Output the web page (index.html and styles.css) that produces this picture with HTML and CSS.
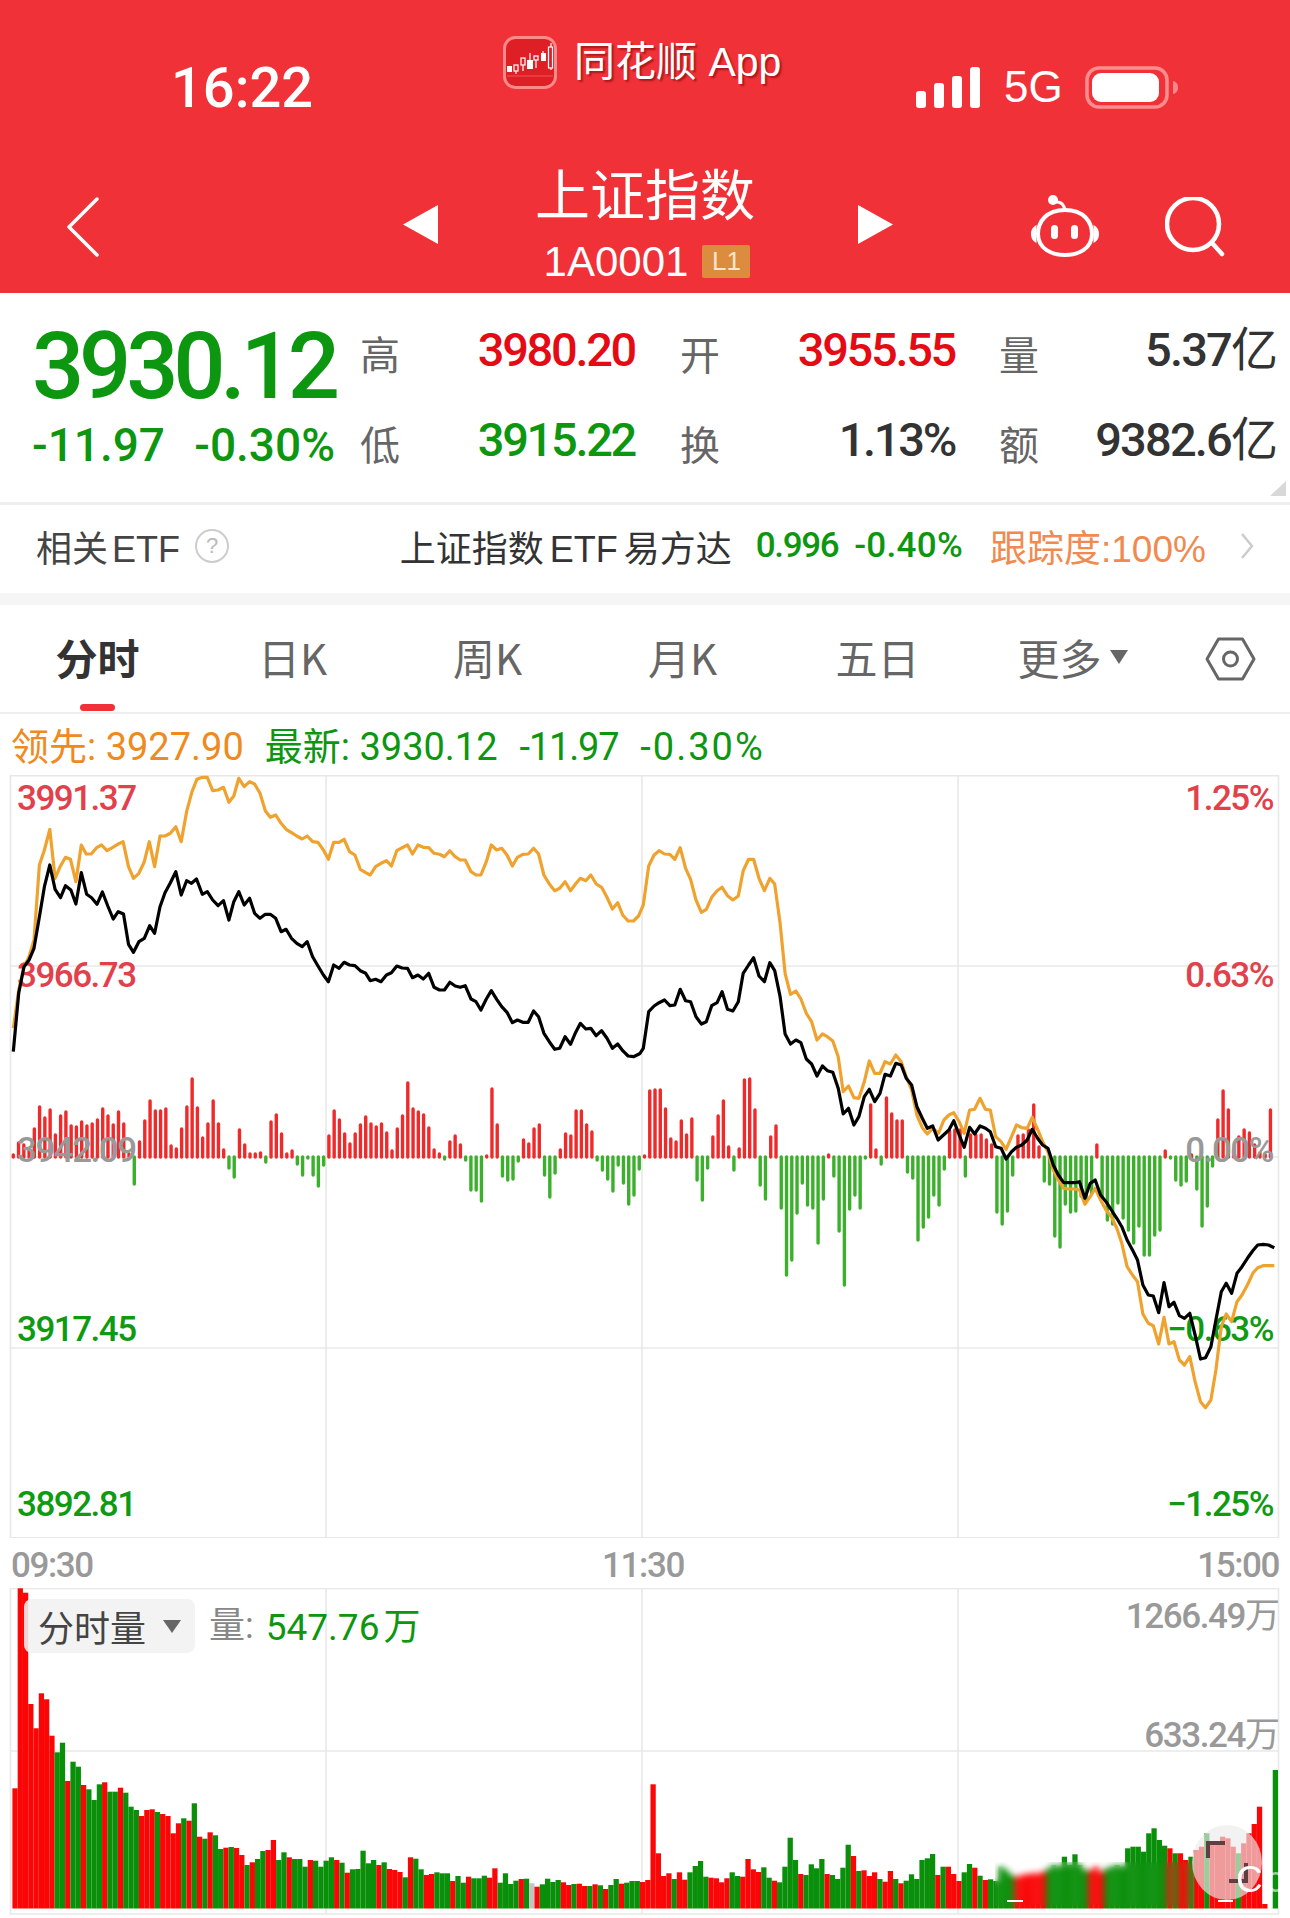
FILE: index.html
```html
<!DOCTYPE html>
<html lang="zh-CN">
<head>
<meta charset="utf-8">
<title>上证指数</title>
<link rel="stylesheet" href="styles.css">
</head>
<body>
<div class="page">
  <header class="header">
    <div class="status">
      <div class="time">16:22</div>
      <div class="brand">
        <svg class="logo" viewBox="0 0 54 53">
          <rect x="1.5" y="1.5" width="51" height="50" rx="11" fill="#df1f26" stroke="#fa8a8c" stroke-width="3"/>
          <path d="M4 40H50" stroke="#f0585c" stroke-width="1"/>
          <path d="M13 30v8M20 27v8M27 17v11M33 22v10M40 15v9M48 7v27" stroke="#fff" stroke-width="1.2"/>
          <rect x="4" y="30" width="5" height="6" fill="#fff"/>
          <rect x="11" y="29" width="4" height="6" fill="#df1f26" stroke="#fff" stroke-width="1.2"/>
          <rect x="18" y="22" width="4" height="7" fill="#df1f26" stroke="#fff" stroke-width="1.2"/>
          <rect x="24" y="24" width="6" height="9" fill="#fff"/>
          <rect x="31" y="20" width="4" height="4" fill="#df1f26" stroke="#fff" stroke-width="1.2"/>
          <rect x="38" y="17" width="5" height="8" fill="#fff"/>
          <rect x="45.5" y="11" width="4" height="21" fill="#df1f26" stroke="#fff" stroke-width="1.2"/>
        </svg>
        <span class="brand-name">同花顺 App</span>
      </div>
      <div class="sys">
        <svg class="signal" viewBox="0 0 65 41">
          <rect x="0" y="24" width="10" height="17" rx="3" fill="#fff"/>
          <rect x="18" y="16" width="10" height="25" rx="3" fill="#fff"/>
          <rect x="36" y="9" width="10" height="32" rx="3" fill="#fff"/>
          <rect x="54" y="0" width="10" height="41" rx="3" fill="#fff"/>
        </svg>
        <span class="net">5G</span>
        <svg class="battery" viewBox="0 0 94 43">
          <rect x="2" y="2" width="80" height="39" rx="12" fill="none" stroke="#fb8d8f" stroke-width="3.5"/>
          <rect x="7" y="7" width="67" height="29" rx="9" fill="#fff"/>
          <path d="M88 15c4 1 5 4 5 6.500s-1 5.500-5 6.500z" fill="#f98688"/>
        </svg>
      </div>
    </div>
    <nav class="nav">
      <svg class="back" viewBox="0 0 33 60"><path d="M31 2 3 30l28 28" fill="none" stroke="#fff" stroke-width="3.500" stroke-linecap="round" stroke-linejoin="round"/></svg>
      <svg class="tri" viewBox="0 0 35 39"><path d="M35 0V39L0 19.500z" fill="#fff"/></svg>
      <div class="nav-title">
        <div class="index-name">上证指数</div>
        <div class="index-code"><span>1A0001</span><span class="level">L1</span></div>
      </div>
      <svg class="tri" viewBox="0 0 35 39"><path d="M0 0V39L35 19.500z" fill="#fff"/></svg>
      <svg class="robot" viewBox="0 0 70 63">
        <circle cx="23" cy="6" r="5" fill="#fff"/>
        <path d="M27 8c4 0 7 3 8 8" fill="none" stroke="#fff" stroke-width="3" stroke-linecap="round"/>
        <path d="M35 16c19 0 27 12 27 24 0 15-14 21-27 21S8 55 8 40c0-12 8-24 27-24z" fill="none" stroke="#fff" stroke-width="4"/>
        <path d="M6.500 31c-4 2-5.500 5-5.500 9s1.500 7 5.500 9zM63.500 31c4 2 5.500 5 5.500 9s-1.500 7-5.500 9z" fill="#fff"/>
        <rect x="21" y="31" width="7" height="14" rx="3.500" fill="#fff"/>
        <rect x="41" y="31" width="7" height="14" rx="3.500" fill="#fff"/>
      </svg>
      <svg class="search" viewBox="0 0 60 60"><circle cx="28" cy="27" r="26" fill="none" stroke="#fff" stroke-width="4.500"/><path d="M48 47l9 10" stroke="#fff" stroke-width="4.500" stroke-linecap="round"/></svg>
    </nav>
  </header>

  <section class="quote">
    <div class="quote-main">
      <div class="price">3930.12</div>
      <div class="change"><span>-11.97</span><span>-0.30%</span></div>
    </div>
    <div class="stats">
      <span class="stat-label">高</span><span class="stat-val up">3980.20</span>
      <span class="stat-label">开</span><span class="stat-val up">3955.55</span>
      <span class="stat-label">量</span><span class="stat-val">5.37<i>亿</i></span>
      <span class="stat-label">低</span><span class="stat-val down">3915.22</span>
      <span class="stat-label">换</span><span class="stat-val">1.13%</span>
      <span class="stat-label">额</span><span class="stat-val">9382.6<i>亿</i></span>
    </div>
    <span class="corner"></span>
  </section>

  <section class="etf">
    <span class="etf-title">相关 ETF</span>
    <span class="help">?</span>
    <span class="etf-name">上证指数 ETF 易方达</span>
    <span class="etf-num">0.996</span>
    <span class="etf-num etf-pct">-0.40%</span>
    <span class="etf-track">跟踪度:100%</span>
    <svg class="etf-arrow" viewBox="0 0 14 26"><path d="M2 1l10 12L2 25" fill="none" stroke="#ccc" stroke-width="2.500"/></svg>
  </section>
  <div class="band"></div>

  <nav class="tabs">
    <div class="tab active">分时</div>
    <div class="tab">日K</div>
    <div class="tab">周K</div>
    <div class="tab">月K</div>
    <div class="tab">五日</div>
    <div class="tab">更多<span class="caret"></span></div>
    <div class="tab-set">
      <svg class="hex" viewBox="0 0 51 44"><path d="M13.500 2h24L49 22 37.500 42h-24L2 22z" fill="none" stroke="#666" stroke-width="3" stroke-linejoin="round"/><circle cx="25.500" cy="22" r="7" fill="none" stroke="#666" stroke-width="3"/></svg>
    </div>
  </nav>

  <div class="legend">
    <span class="lead">领先: 3927.90</span>
    <span class="last">最新: 3930.12</span>
    <span class="last chg-a">-11.97</span>
    <span class="last chg-b">-0.30%</span>
  </div>

  <section class="chart price-chart">
    <svg id="priceGrid" class="layer" viewBox="0 775 1290 763"></svg>
    <span class="axis up-t left y0">3991.37</span>
    <span class="axis up-t left y1">3966.73</span>
    <span class="axis zero left y2">3942.09</span>
    <span class="axis down-t left y3">3917.45</span>
    <span class="axis down-t left y4">3892.81</span>
    <span class="axis up-t right y0">1.25%</span>
    <span class="axis up-t right y1">0.63%</span>
    <span class="axis zero right y2">0.00%</span>
    <span class="axis down-t right y3">−0.63%</span>
    <span class="axis down-t right y4">−1.25%</span>
    <svg id="priceLines" class="layer" viewBox="0 775 1290 763"></svg>
  </section>

  <div class="times"><span>09:30</span><span class="mid">11:30</span><span>15:00</span></div>

  <section class="chart volume-chart">
    <svg id="volBars" class="layer" viewBox="0 1588 1290 330"></svg>
    <div class="vol-head">
      <div class="vol-select">分时量<span class="vol-caret"></span></div>
      <span class="vol-label">量:</span>
      <span class="vol-num">547.76<i>万</i></span>
    </div>
    <span class="vol-axis va0">1266.49<i>万</i></span>
    <span class="vol-axis va1">633.24<i>万</i></span>
    <div class="smudge"></div>
    <div class="fab">
      <svg viewBox="0 0 70 75"><path d="M16 33V18h17M54 38v18H37" fill="none" stroke="#5e4044" stroke-width="4"/></svg>
    </div>
    <span class="mark">C<span class="mark-c">c</span></span>
    <span class="dash d1"></span>
    <span class="dash d2"></span>
  </section>
</div>
<script src="chart.js"></script>
</body>
</html>
```

FILE: styles.css
```css
* { box-sizing: border-box; }
html, body { margin: 0; padding: 0; background: #fff; }
body { font-family: "Liberation Sans", "Noto Sans CJK SC", sans-serif; }
i { font-style: normal; }
.page { width: 1290px; height: 1918px; overflow: hidden; position: relative; }

.header { height: 293px; background: #f03238; color: #fff; }
.status { height: 165px; display: flex; align-items: flex-start; padding: 36px 0 0 171px; }
.time { width: 332px; margin-top: 22px; height: 60px; font: 500 56px/60px Roboto, sans-serif; }
.brand { width: 413px; display: flex; align-items: center; gap: 17px; height: 53px; }
.logo { width: 54px; height: 53px; flex: none; }
.brand-name { font: 400 41px/55px "Liberation Sans", "Noto Sans CJK SC", sans-serif; text-shadow: 2px 2px 2px rgba(110, 0, 0, .55); white-space: nowrap; }
.sys { display: flex; align-items: center; height: 60px; margin-top: 21px; }
.signal { width: 65px; height: 41px; }
.net { font: 400 44px/60px "Liberation Sans", sans-serif; margin: 0 22px 0 23px; }
.battery { width: 94px; height: 43px; }

.nav { height: 128px; display: flex; align-items: flex-start; padding-left: 66px; }
.back { width: 33px; height: 60px; margin: 32px 304px 0 0; flex: none; }
.tri { width: 35px; height: 39px; margin-top: 40px; flex: none; }
.nav-title { width: 420px; flex: none; display: flex; flex-direction: column; align-items: center; }
.index-name { font: 400 55px/56px "Noto Sans CJK SC", sans-serif; margin-left: -6px; margin-top: -2px; }
.index-code { margin-top: 26px; height: 33px; display: flex; align-items: center; gap: 14px; font: 400 42px/33px "Liberation Sans", sans-serif; margin-left: -2px; }
.level { width: 48px; height: 33px; background: #dc8c3f; border-radius: 2px; font-size: 26px; line-height: 33px; text-align: center; color: #fbe6cf; }
.robot { width: 70px; height: 63px; margin: 29px 65px 0 137px; flex: none; }
.search { width: 60px; height: 60px; margin-top: 32px; flex: none; }

.quote { height: 212px; display: flex; border-bottom: 3px solid #eee; position: relative; }
.quote-main { width: 360px; padding: 29px 0 0 32px; flex: none; color: #0d960f; font-family: Roboto, sans-serif; font-weight: 500; }
.price { font-size: 92px; line-height: 90px; letter-spacing: -5.2px; }
.change { margin-top: 8px; width: 303px; display: flex; justify-content: space-between; font-size: 46px; line-height: 50px; }
.stats { flex: none; padding-top: 15px; display: grid; grid-template-columns: 40px 235px 84px 236px 83px 240px; grid-auto-rows: 90px; }
.stat-label { font: 400 40px/90px "Noto Sans CJK SC", sans-serif; color: #666; }
.stat-label:nth-child(6n+3) { margin-left: 45px; }
.stat-label:nth-child(6n+5) { margin-left: 44px; }
.stat-val { font: 500 47px/84px Roboto, "Noto Sans CJK SC", sans-serif; letter-spacing: -2.3px; text-align: right; color: #333; white-space: nowrap; }
.stat-val:nth-child(6n) { letter-spacing: -1.8px; }
.stat-val i { font-size: 47px; letter-spacing: 0; font-weight: 400; }
.up { color: #e40b14; }
.down { color: #0d960f; }
.corner { position: absolute; right: 4px; bottom: 6px; width: 0; height: 0; border-left: 16px solid transparent; border-bottom: 15px solid #d8d8d8; }

.etf { height: 88px; display: flex; align-items: center; padding: 0 36px 6px; font-size: 36px; color: #333; white-space: nowrap; }
.etf-title { color: #444; word-spacing: -6px; }
.help { width: 34px; height: 34px; border: 2.5px solid #ccc; border-radius: 50%; margin-left: 15px; color: #bbb; font-size: 22px; line-height: 29px; text-align: center; flex: none; }
.etf-name { margin-left: auto; width: 328px; word-spacing: -4px; color: #333; }
.etf-num { font: 500 35px/40px Roboto, sans-serif; letter-spacing: -1.4px; color: #0d960f; margin-left: 28px; }
.etf-num.etf-pct { margin-left: 16px; letter-spacing: .3px; }
.etf-track { margin-left: 27px; color: #f08a50; width: 214px; font-size: 37px; }
.etf-arrow { width: 14px; height: 26px; margin-left: 36px; flex: none; }

.band { height: 12px; background: #f5f5f5; }

.tabs { height: 109px; display: flex; border-bottom: 2px solid #eee; position: relative; }
.tab { width: 195px; flex: none; text-align: center; font: 400 42px/106px "Noto Sans CJK SC", sans-serif; color: #666; display: flex; justify-content: center; align-items: center; padding-bottom: 3px; }
.tab.active { color: #333; font-weight: 700; position: relative; }
.tab.active::after { content: ""; position: absolute; left: 80px; top: 99px; width: 35px; height: 7px; background: #f03238; border-radius: 4px; }
.caret { width: 0; height: 0; margin-left: 8px; border-left: 9px solid transparent; border-right: 9px solid transparent; border-top: 14px solid #666; }
.tab-set { flex: 1; display: flex; align-items: center; justify-content: center; }
.hex { width: 51px; height: 44px; }

.legend { height: 61px; display: flex; align-items: center; padding: 4px 0 0 11px; font: 400 38px/60px Roboto, "Noto Sans CJK SC", sans-serif; white-space: nowrap; }
.lead { color: #ee8a1e; margin-right: 21px; }
.last { color: #0d960f; margin-right: 22px; }
.chg-a { letter-spacing: -1.2px; }
.chg-b { letter-spacing: 2px; }

.chart { position: relative; width: 1290px; }
.layer { position: absolute; left: 0; top: 0; width: 1290px; height: 100%; }
.price-chart { height: 763px; }
.axis { position: absolute; font: 500 35px/40px Roboto, sans-serif; letter-spacing: -1.5px; }
.left { left: 17px; }
.right { right: 17px; }
.y0 { top: 4px; }
.y1 { top: 181px; }
.y2 { top: 356px; }
.y3 { top: 535px; }
.y4 { top: 710px; }
.up-t { color: #e2404a; }
.zero { color: #999; }
.down-t { color: #0f9a12; }

.times { height: 50px; display: flex; justify-content: space-between; align-items: center; padding: 6px 11px 0; font: 500 35px/44px Roboto, sans-serif; letter-spacing: -1.4px; color: #999; }
.mid { margin-left: -4px; }

.volume-chart { height: 330px; }
.vol-head { position: absolute; left: 24px; top: 11px; display: flex; align-items: center; height: 54px; }
.vol-select { width: 171px; height: 54px; background: rgba(241, 241, 241, .88); border-radius: 8px; padding-left: 14px; display: flex; align-items: center; font: 400 36px/54px "Noto Sans CJK SC", sans-serif; color: #444; }
.vol-caret { width: 0; height: 0; margin-left: 17px; border-left: 9px solid transparent; border-right: 9px solid transparent; border-top: 13px solid #666; }
.vol-label { margin-left: 14px; font: 400 36px/54px Roboto, "Noto Sans CJK SC", sans-serif; color: #888; white-space: nowrap; }
.vol-num { margin-left: 12px; padding-top: 4px; font: 400 37px/54px Roboto, "Noto Sans CJK SC", sans-serif; color: #0d960f; white-space: nowrap; }
.vol-num i { margin-left: 4px; }
.vol-axis { position: absolute; right: 10px; font: 500 35px/40px Roboto, "Noto Sans CJK SC", sans-serif; letter-spacing: -1.4px; color: #999; white-space: nowrap; }
.vol-axis i { letter-spacing: 0; font-weight: 400; }
.va0 { top: 9px; }
.va1 { top: 128px; }
.smudge { position: absolute; left: 995px; top: 274px; width: 200px; height: 46px; -webkit-backdrop-filter: blur(3px); backdrop-filter: blur(3px); }
.fab { position: absolute; left: 1192px; top: 237px; width: 70px; height: 75px; border-radius: 50%; background: rgba(235, 235, 235, .65); }
.fab svg { display: block; width: 70px; height: 75px; }
.mark { position: absolute; left: 1236px; top: 272px; font: 400 37px/40px "Liberation Sans", sans-serif; color: #fff; white-space: nowrap; }
.mark-c { opacity: .6; margin-left: 3px; }
.dash { position: absolute; height: 2px; background: #fff; }
.d1 { left: 1007px; top: 312px; width: 16px; }
.d2 { left: 1218px; top: 312px; width: 15px; }
```

FILE: chart.js
```js
(function () {
  var NS = "http://www.w3.org/2000/svg";
  var RED = "#ee2a2a", GREEN = "#3cb02c", VR = "#fa0606", VG = "#0a8f0a";

  function el(parent, name, attrs) {
    var n = document.createElementNS(NS, name);
    for (var k in attrs) n.setAttribute(k, attrs[k]);
    parent.appendChild(n);
    return n;
  }
  function line(p, x1, y1, x2, y2) {
    el(p, "line", { x1: x1, y1: y1, x2: x2, y2: y2, stroke: "#e8e8e8", "stroke-width": 1.6 });
  }
  function conv(str, x0, y0) {
    return str.trim().split(/\s+/).map(function (s) {
      var a = s.split(",");
      return (x0 + a[0] / 2.412).toFixed(1) + "," + (y0 + a[1] / 3).toFixed(1);
    }).join(" ");
  }

  /* price panel grid */
  var pg = document.getElementById("priceGrid");
  [775.7, 966, 1348, 1537.7].forEach(function (y) { line(pg, 10, y, 1279, y); });
  [10.5, 326, 642, 958, 1278.5].forEach(function (x) { line(pg, x, 775, x, 1538); });

  /* intraday bars: positive = red, negative = green (height in px) */
  var bars = [2,14,12,6,28,50,39,47,22,41,45,31,30,35,31,33,37,48,41,32,45,33,3,-27,15,36,56,46,46,48,11,8,28,50,78,49,19,33,56,33,7,-11,-20,27,12,3,3,4,-5,35,42,23,3,6,-7,-18,-1,-18,-29,-8,21,46,37,23,13,23,32,40,33,30,33,24,6,28,41,74,48,45,42,29,7,3,-2,15,21,12,-3,-33,-33,-44,1,68,32,-19,-23,-22,-4,17,13,28,32,-18,-40,-16,7,23,21,46,46,32,25,-3,-13,-22,-34,-8,-26,-47,-38,-12,1,66,67,67,48,18,15,36,22,38,-23,-43,-11,20,41,56,10,-13,8,77,78,47,-28,-42,20,31,-51,-118,-103,-56,-26,-48,-51,-86,-42,2,-19,-74,-128,-52,-38,-51,-1,52,7,-7,59,43,36,36,-15,-21,-83,-70,-60,-38,-48,-12,26,27,27,-19,22,22,22,17,12,-55,-67,-54,-18,21,22,27,52,10,-24,-27,-79,-90,-47,-55,-54,-39,-43,-36,12,-39,-63,-67,-46,-61,-73,-86,-69,-98,-98,-78,-73,6,-1,-23,-28,-24,2,-32,-69,-49,-9,37,66,47,7,20,27,24,12,4,2,47];
  line(pg, 10, 1157, 1279, 1157);
  bars.forEach(function (h, i) {
    var x = 13.3 + i * 5.26;
    el(pg, "line", {
      x1: x, x2: x, y1: 1157, y2: 1157 - h,
      stroke: h >= 0 ? RED : GREEN, "stroke-width": 3.4, "stroke-linecap": "round"
    });
  });

  /* price lines, traced in three overlapping segments */
  var orange =
    conv("32,805 45,690 58,620 70,590 82,540 95,315 107,270 120,208 133,355 145,320 158,292 170,298 183,365 196,255 208,282 220,282 233,263 245,255 258,272 271,263 284,253 297,245 310,320 322,355 335,340 348,305 360,245 373,320 386,228 398,228 411,220 424,200 437,245 450,155 463,95 475,58 488,52 500,52 513,92 526,90 539,82 552,127 564,108 576,55 589,80 602,65 614,72 627,100 640,152 652,172 665,165 678,190 690,208 703,218 716,228 729,237 741,228 754,245 767,247 780,270 792,298 805,247 818,247 830,238 843,275 856,285 869,328 882,338 893,345 906,320 919,310 932,302 944,318 957,272 970,263 983,255 995,282 1008,255 1021,262 1034,263 1047,280 1060,283 1072,290 1085,272 1098,290 1110,300 1122,300 1136,335 1148,345 1160,345 1173,305 1185,255 1198,270 1210,265 1223,285 1236,318 1248,292 1261,283 1274,282 1287,265 1299,282 1312,345 1325,372 1338,392 1350,385 1363,365 1376,392 1388,372 1400,355 1413,362 1425,345 1438,372 1451,382 1464,412 1477,447 1490,428 1502,465 1515,483 1528,483 1540,468", 0, 760) + " " +
    conv("0,458 8,435 21,318 34,285 46,272 59,282 72,283 84,298 97,263 110,325 122,358 135,420 148,457 160,448 173,412 186,392 198,382 211,407 224,420 237,408 249,332 262,298 274,298 287,355 300,392 313,355 325,372 338,490 350,640 363,703 376,693 388,717 401,760 414,785 427,840 440,822 452,830 465,843 478,890 490,995 503,978 516,1013 528,1015 541,965 553,903 566,940 579,940 591,905 604,912 617,885 630,905 642,950 655,990 668,1065 681,1103 693,1122 706,1105", 640, 760) + " " +
    conv("720,280 733,240 745,225 757,218 770,245 782,280 795,210 807,208 820,175 833,208 845,210 858,290 871,305 883,328 896,290 908,255 921,263 934,265 946,232 959,268 971,305 984,335 997,390 1009,420 1022,445 1035,447 1048,447 1060,450 1073,493 1086,470 1098,445 1111,480 1124,510 1137,530 1150,565 1162,610 1175,680 1188,705 1200,725 1213,822 1226,850 1238,857 1251,912 1264,832 1276,912 1288,905 1301,960 1313,975 1326,950 1339,1025 1352,1085 1364,1103 1377,1080 1389,990 1402,860 1414,822 1427,845 1440,785 1452,765 1465,735 1478,700 1490,683 1503,677 1516,677 1530,677", 640, 1040);
  var black =
    conv("32,875 45,700 58,620 70,600 82,565 95,470 107,380 120,315 133,388 146,413 158,377 171,390 183,432 196,338 209,403 221,413 234,433 247,396 260,438 273,477 285,455 298,462 310,553 322,577 335,545 348,535 361,497 373,520 386,440 398,398 411,368 424,335 437,405 450,362 462,370 474,357 488,403 500,395 513,420 526,437 539,422 552,480 564,425 576,395 589,435 602,415 614,460 627,475 640,463 652,463 665,475 678,515 690,508 703,535 716,550 729,560 741,545 754,590 767,618 780,645 792,665 805,615 818,625 830,607 843,615 856,617 869,632 882,640 893,662 906,658 919,665 932,645 944,638 957,618 970,624 983,625 995,653 1008,645 1021,657 1034,640 1047,682 1060,690 1072,690 1085,667 1098,678 1110,682 1122,677 1136,717 1148,725 1160,750 1173,717 1185,692 1198,718 1210,740 1223,757 1236,788 1248,780 1261,787 1274,787 1287,753 1299,770 1312,820 1325,845 1338,868 1350,865 1363,830 1376,853 1388,818 1400,790 1413,807 1425,805 1438,827 1451,812 1464,835 1477,865 1490,852 1502,872 1515,888 1528,890 1540,883", 0, 760) + " " +
    conv("0,880 8,865 21,755 34,738 46,728 59,720 72,737 84,735 97,688 110,722 122,725 135,770 148,792 160,785 173,737 186,728 198,695 211,748 224,753 237,725 249,640 262,615 274,593 287,648 300,665 313,608 325,632 338,710 350,822 363,852 376,840 388,848 401,897 414,912 427,948 440,918 452,932 465,937 478,985 490,1062 503,1045 516,1095 528,1070 541,1010 553,988 566,1025 579,1000 591,943 604,948 617,910 630,915 642,955 655,975 668,1040 681,1075 693,1105 706,1098", 640, 760) + " " +
    conv("719,300 732,285 745,270 757,242 770,285 782,322 795,262 807,282 820,258 833,265 845,275 858,320 871,325 883,357 896,335 908,322 921,315 934,300 946,268 959,295 971,315 984,325 997,375 1009,405 1022,428 1035,428 1048,428 1060,425 1073,475 1086,430 1098,420 1111,465 1124,485 1137,510 1150,535 1162,560 1175,600 1188,630 1200,660 1213,735 1226,765 1238,768 1251,818 1264,728 1276,800 1288,787 1301,827 1313,835 1326,820 1339,885 1352,957 1364,953 1377,920 1389,840 1402,755 1414,730 1427,760 1440,700 1452,680 1465,655 1478,632 1490,615 1503,613 1516,615 1530,623", 640, 1040);
  var pl = document.getElementById("priceLines");
  el(pl, "polyline", { points: orange, fill: "none", stroke: "#f0a22e", "stroke-width": 3.2, "stroke-linejoin": "round" });
  el(pl, "polyline", { points: black, fill: "none", stroke: "#000", "stroke-width": 3.2, "stroke-linejoin": "round" });

  /* volume panel: top (in zoom units) with colour r / g / n */
  var vols = "865r 265r 278r 612r 685r 580r 598r 707r 757g 728g 843r 785g 800g 855r 868g 900g 853g 847r 875g 875g 863r 878g 920g 930g 948r 930r 928r 936g 942r 948r 1000r 970r 955g 962r 910g 1010r 1016g 997r 1006g 1047g 1043r 1041g 1044r 1065r 1095g 1087r 1077g 1053g 1050r 1020r 1080g 1057g 1072r 1077g 1077g 1100g 1080r 1082g 1100g 1082g 1072g 1080r 1088g 1118r 1108g 1107g 1052g 1090g 1080g 1095r 1087g 1107r 1110r 1116r 1132g 1072r 1076g 1108g 1125r 1122r 1117g 1120g 1120g 1143r 1128g 1148g 1130r 1135g 1135g 1127g 1133r 1105r 1148g 1120g 1152g 1142g 1137r 1136g 1150n 1160r 1153g 1136g 1146g 1140g 1147r 1155r 1152g 1151r 1158r 1158g 1153r 1156g 1167r 1155g 1137g 1151r 1148g 1143g 1143g 1146r 1140r 853r 1060r 1128r 1120r 1137g 1117r 1139r 1117g 1098g 1083g 1130g 1133r 1135r 1147r 1135r 1117g 1128g 1130r 1077r 1108r 1116r 1102g 1133g 1142r 1147g 1100g 1013g 1080g 1122r 1125g 1093g 1105g 1077g 1122r 1125g 1137g 1103g 1034g 1068r 1113g 1111r 1128r 1117r 1137g 1145r 1113r 1137g 1150r 1142g 1123g 1137g 1080g 1075g 1062g 1125r 1100g 1100r 1122r 1143r 1117g 1092g 1103r 1127g 1140r 1138g 1143g 1100g 1110g 1125g 1130r 1125r 1122r 1120r 1120r 1115r 1105g 1095g 1100g 1070g 1095g 1063g 1095g 1110g 1110r 1100r 1115r 1105g 1100g 1095g 1100g 1045g 1040g 1040g 1055g 1000g 985g 1020g 1037g 1045r 1060g 1060r 1080r 1070g 1050r 1040r 1000g 1025r 1030r 1010r 1015r 1040r 1060g 1030r 1000r 972r 920r 1212r 1225n 810g".split(" ");
  var vb = document.getElementById("volBars");
  [1588.5, 1751, 1914].forEach(function (y) { line(vb, 10, y, 1279, y); });
  [10.5, 326, 642, 958, 1278.5].forEach(function (x) { line(vb, x, 1588, x, 1914); });
  var step = 1265.6 / vols.length;
  vols.forEach(function (v, i) {
    var top = 1500 + parseInt(v, 10) / 3;
    var c = v.slice(-1);
    el(vb, "rect", {
      x: (12.4 + i * step).toFixed(2), y: top.toFixed(1),
      width: step.toFixed(2), height: (1908.5 - top).toFixed(1),
      fill: c === "r" ? VR : c === "g" ? VG : "#c4c4c4"
    });
  });
})();
```
